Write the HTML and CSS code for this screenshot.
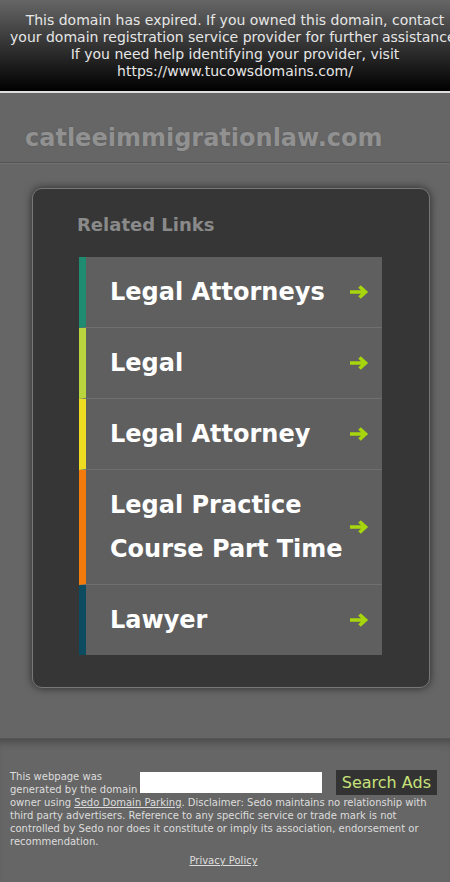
FILE: index.html
```
<!DOCTYPE html>
<html lang="en">
<head>
  <meta charset="UTF-8">
  <title>catleeimmigrationlaw.com</title>
  <link rel="stylesheet" href="styles.css">
</head>
<body>
  <div class="expirado">
    <p>This domain has expired. If you owned this domain, contact</p>
    <p>your domain registration service provider for further assistance.</p>
    <p>If you need help identifying your provider, visit</p>
    <p>https://www.tucowsdomains.com/</p>
  </div>

  <div class="cabecalho">
    <h1>catleeimmigrationlaw.com</h1>
  </div>

  <div class="conteudo">
    <div class="caixa">
      <h2>Related Links</h2>
      <ul class="links">
        <li class="cor1"><a href="#">Legal Attorneys</a><span class="seta"><svg width="20" height="16" viewBox="0 0 20 16"><path d="M1 8H16M10.5 2.5L16.5 8L10.5 13.5"/></svg></span></li>
        <li class="cor2"><a href="#">Legal</a><span class="seta"><svg width="20" height="16" viewBox="0 0 20 16"><path d="M1 8H16M10.5 2.5L16.5 8L10.5 13.5"/></svg></span></li>
        <li class="cor3"><a href="#">Legal Attorney</a><span class="seta"><svg width="20" height="16" viewBox="0 0 20 16"><path d="M1 8H16M10.5 2.5L16.5 8L10.5 13.5"/></svg></span></li>
        <li class="cor4"><a href="#">Legal Practice Course Part Time</a><span class="seta"><svg width="20" height="16" viewBox="0 0 20 16"><path d="M1 8H16M10.5 2.5L16.5 8L10.5 13.5"/></svg></span></li>
        <li class="cor5"><a href="#">Lawyer</a><span class="seta"><svg width="20" height="16" viewBox="0 0 20 16"><path d="M1 8H16M10.5 2.5L16.5 8L10.5 13.5"/></svg></span></li>
      </ul>
    </div>
  </div>

  <div class="rodape">
    <form class="pesquisa" onsubmit="return false">
      <input type="text">
      <button type="submit">Search Ads</button>
    </form>
    <p class="aviso">This webpage was generated by the domain owner using <a href="#">Sedo Domain Parking</a>. Disclaimer: Sedo maintains no relationship with third party advertisers. Reference to any specific service or trade mark is not controlled by Sedo nor does it constitute or imply its association, endorsement or recommendation.</p>
    <p class="privacidade"><a href="#">Privacy Policy</a></p>
  </div>
</body>
</html>
```

FILE: styles.css
```
body {
  margin: 0;
  background: #666;
  font-family: 'DejaVu Sans', sans-serif;
  color: #ddd;
}

/* aviso de dominio expirado */
.expirado {
  background: linear-gradient(#666, #000);
  border-bottom: 2px solid #ddd;
  padding: 12px 0 11px 10px;
  text-align: center;
  color: #e6e6e6;
  font-size: 14px;
  line-height: 17px;
  overflow: hidden;
}

.expirado p {
  margin: 0;
  width: 450px;
  white-space: nowrap;
}

.cabecalho {
  height: 69px;
  border-bottom: 1px solid #555;
  box-shadow: 0 1px 0 #707070;
}

h1 {
  margin: 0;
  padding: 31px 0 0 25px;
  font-size: 24px;
  line-height: 28px;
  color: #919191;
  text-shadow: 0 0 2px rgba(0,0,0,0.15);
}

.conteudo {
  padding: 25px 20px 50px 32px;
  border-bottom: 1px solid #555;
}

.caixa {
  background: #363636;
  border: 1px solid #777;
  border-radius: 10px;
  box-shadow: 0 0 8px rgba(0,0,0,0.6);
  padding: 25px 47px 32px 44px;
}

h2 {
  margin: 0 0 22px 0;
  font-size: 18px;
  line-height: 21px;
  color: #8a8a8a;
}

.links {
  list-style: none;
  margin: 0 0 0 2px;
  padding: 0;
}

.links li {
  display: flex;
  align-items: center;
  background: #5f5f5f;
  border-left: 7px solid #555;
  border-bottom: 1px solid #6f6f6f;
  padding: 13px 13px 13px 24px;
}

.links li:last-child {
  border-bottom: none;
}

.links a {
  flex: 1;
  color: #fff;
  font-size: 24px;
  font-weight: bold;
  line-height: 44px;
  text-decoration: none;
}

.seta {
  display: flex;
  flex-shrink: 0;
}

.seta path {
  fill: none;
  stroke: #a8d60c;
  stroke-width: 3.6;
}

.links .cor1 { border-left-color: #1f8c72; }
.links .cor2 { border-left-color: #b9d43c; }
.links .cor3 { border-left-color: #eedc22; }
.links .cor4 { border-left-color: #f27b0c; }
.links .cor5 { border-left-color: #0d4c60; }

/* rodape com pesquisa */
.rodape {
  padding: 31px 13px 16px 10px;
  box-shadow: inset 0 9px 9px -6px rgba(0,0,0,0.3);
  font-size: 10px;
  line-height: 13px;
}

.pesquisa {
  float: right;
  display: flex;
  align-items: center;
  gap: 14px;
}

.pesquisa input {
  width: 182px;
  height: 21px;
  box-sizing: border-box;
  border: none;
  background: #fff;
  padding: 0 4px;
}

.pesquisa button {
  background: #333;
  color: #c8e27a;
  border: none;
  font-family: 'DejaVu Sans', sans-serif;
  font-size: 16px;
  padding: 3px 6px;
}

.aviso {
  margin: 0;
}

.rodape a {
  color: #ddd;
}

.privacidade {
  margin: 6px 0 0 0;
  text-align: center;
}
```
